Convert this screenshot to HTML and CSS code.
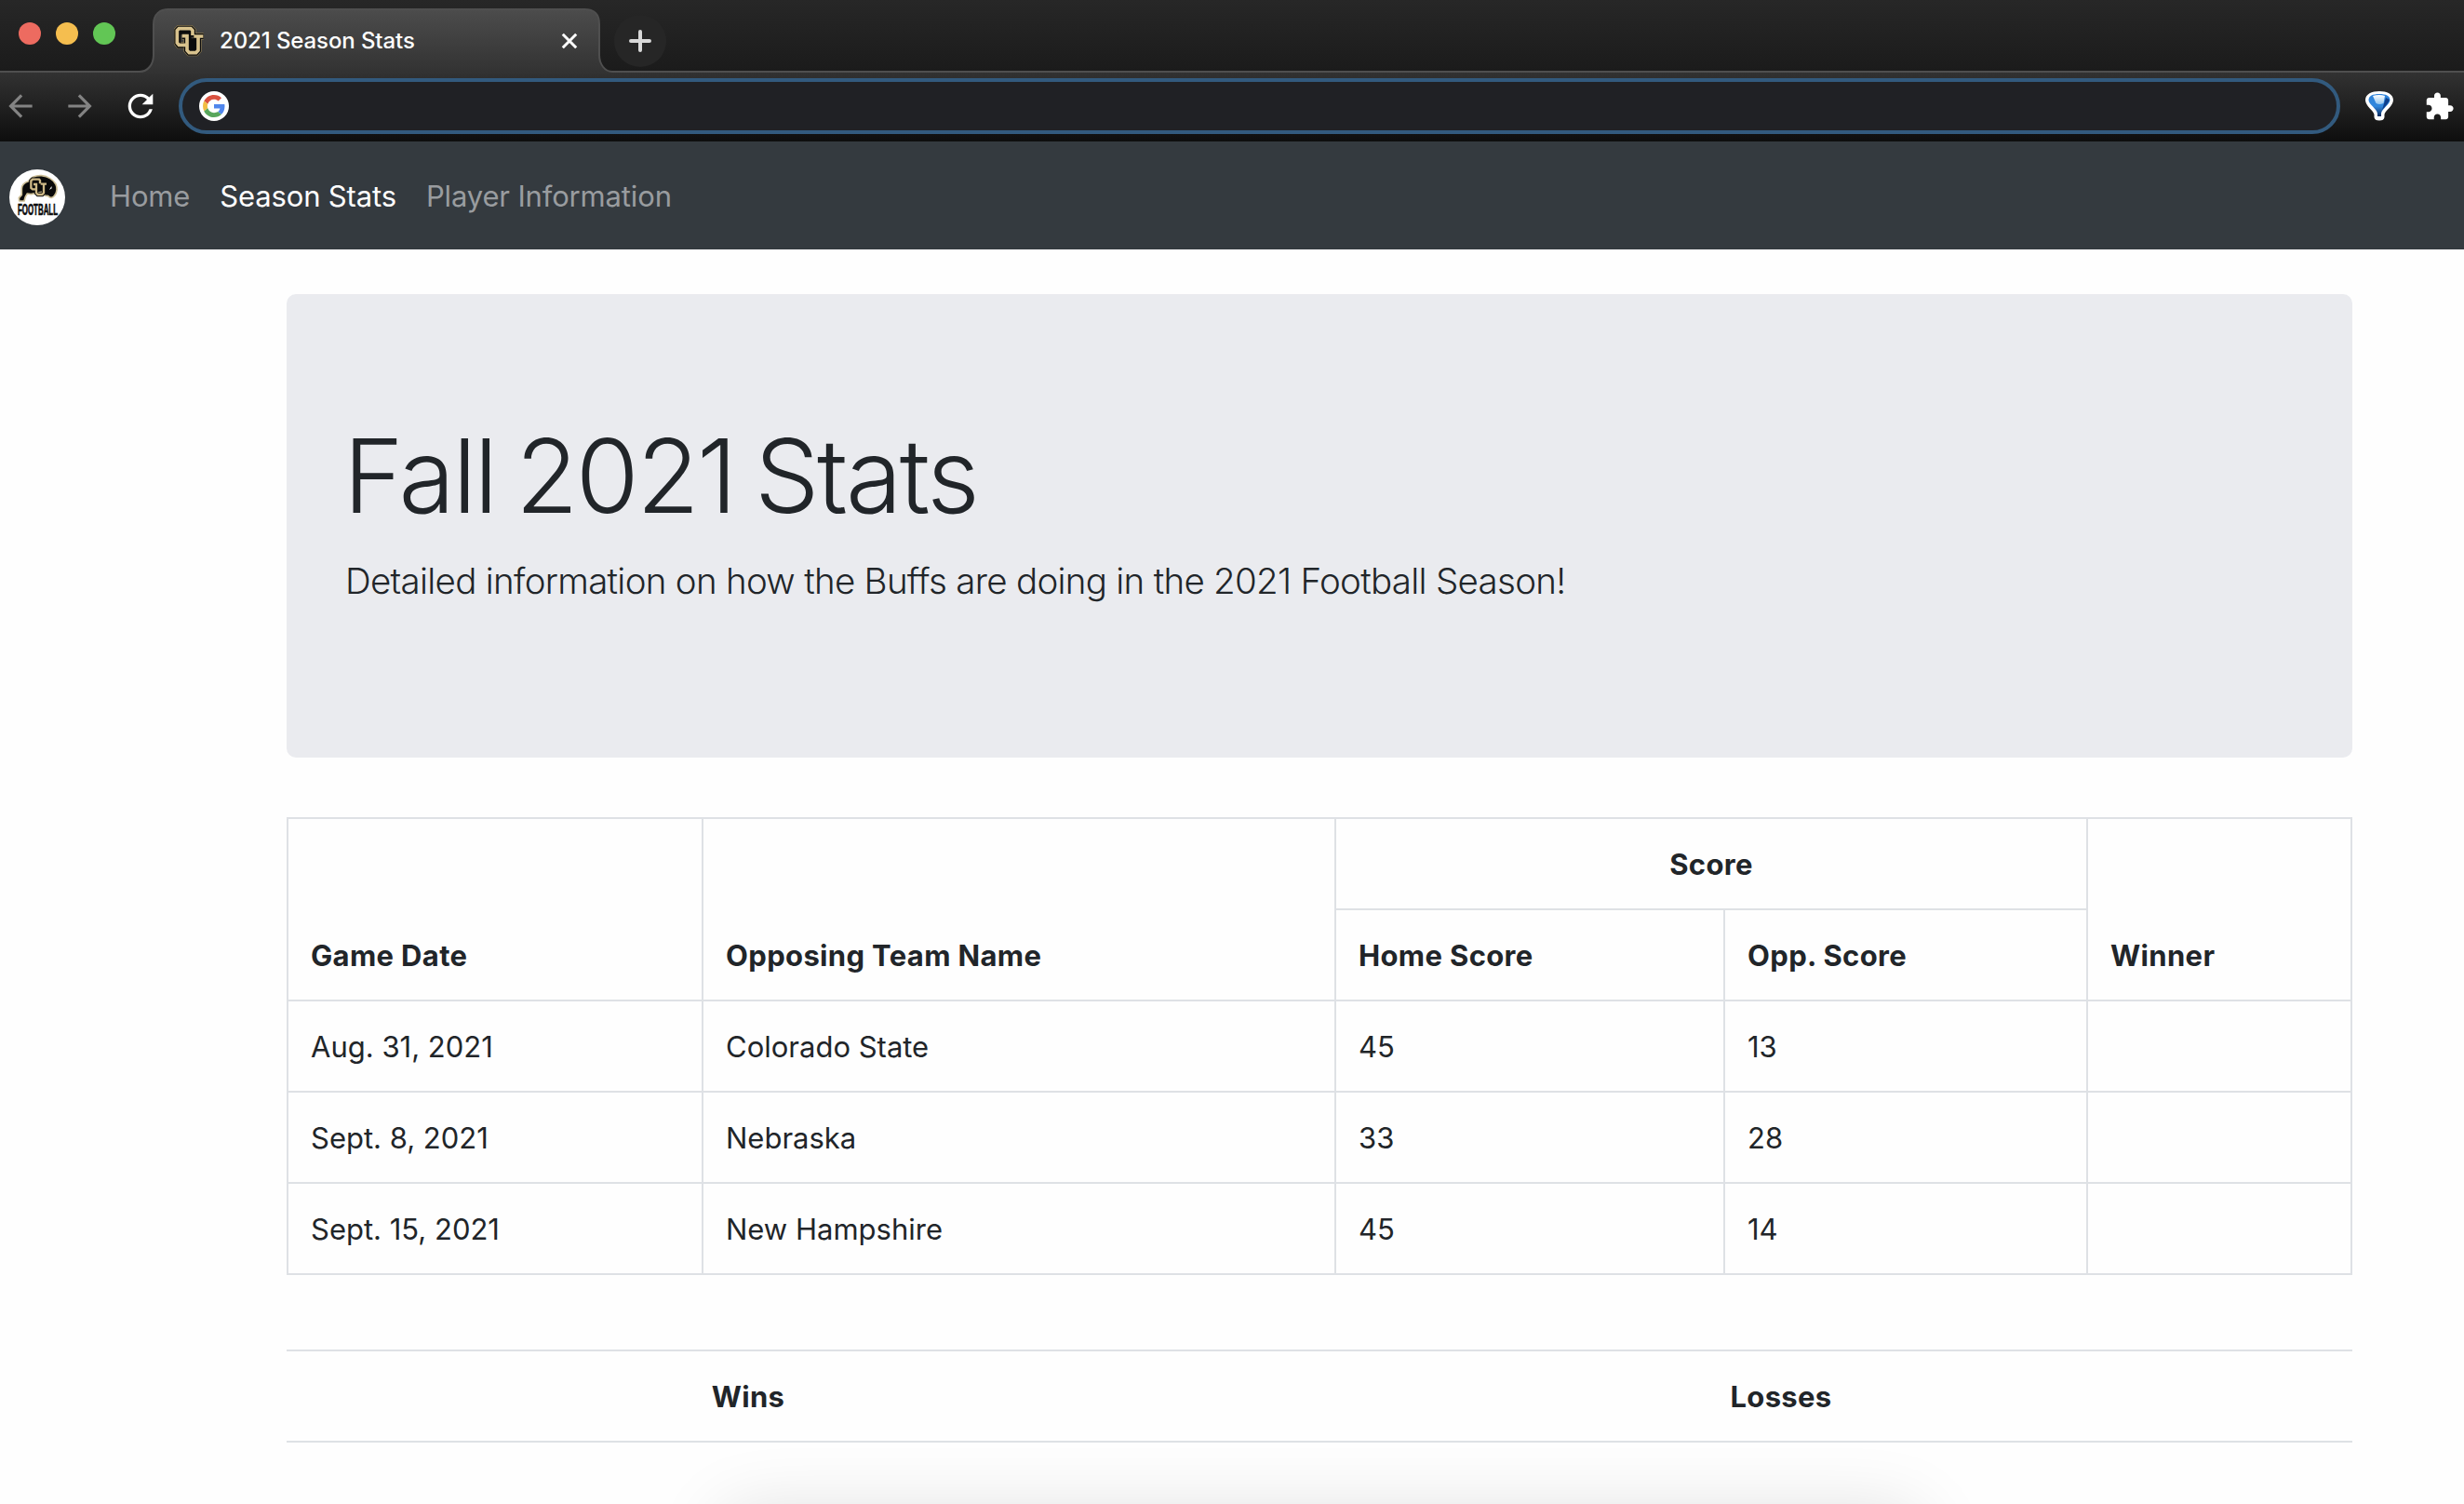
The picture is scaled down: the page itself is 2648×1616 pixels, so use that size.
FILE: index.html
```html
<!DOCTYPE html>
<html lang="en">
<head>
<meta charset="utf-8">
<title>2021 Season Stats</title>
<link rel="stylesheet" href="styles.css">
</head>
<body>
<div class="window">
  <header class="titlebar">
    <div class="lights">
      <span class="light light-close"></span>
      <span class="light light-min"></span>
      <span class="light light-max"></span>
    </div>
    <div class="tab">
      <svg class="tab-shape" viewBox="0 0 508 70" width="508" height="70">
        <defs>
          <linearGradient id="tabFill" x1="0" y1="0" x2="0" y2="1">
            <stop offset="0" stop-color="#4c4c4c"/>
            <stop offset="1" stop-color="#323232"/>
          </linearGradient>
        </defs>
        <path d="M0 68C9 68 15 60 15 50V17C15 6 22 1 31 1H478C488 1 494 6 494 17V50C494 60 500 68 508 68V70H0Z" fill="url(#tabFill)"/>
        <path d="M0 68C9 68 15 60 15 50V17C15 6 22 1 31 1H478C488 1 494 6 494 17V50C494 60 500 68 508 68" fill="none" stroke="#4f4f4f" stroke-width="2"/>
      </svg>
      <svg class="favicon" viewBox="12 9 102 102" width="34" height="34">
        <g fill="none">
          <path d="M72 47V26L66 20H28L22 26V66L28 74H44M38 45H54V90L61 98H83L90 90V46M74 45H107" stroke="#85754f" stroke-width="22"/>
          <path d="M72 47V26L66 20H28L22 26V66L28 74H44M38 45H54V90L61 98H83L90 90V46M74 45H107" stroke="#0c0c0c" stroke-width="18"/>
          <path d="M28 26H68V52H84V92H60V40H34V68H28Z" fill="#0c0c0c"/>
          <path d="M38 44H54V90L61 98H83L90 90V46M76 45H106" stroke="#d8c28d" stroke-width="11"/>
          <path d="M72 42V26L66 20H28L22 26V66L28 73H54" stroke="#d8c28d" stroke-width="11"/>
        </g>
      </svg>
      <span class="tab-title">2021 Season Stats</span>
      <svg class="tab-close" viewBox="0 0 18 18" width="18" height="18"><path d="M1.8 1.8 16.2 16.2M16.2 1.8 1.8 16.2" stroke="#fff" stroke-width="3"/></svg>
    </div>
    <div class="new-tab">
      <svg viewBox="0 0 24 24" width="24" height="24"><path d="M12 2V22M2 12H22" stroke="#d8d8d8" stroke-width="4" stroke-linecap="round"/></svg>
    </div>
  </header>

  <div class="toolbar">
    <svg class="nav-icon" viewBox="0 0 24 24" width="38" height="38"><path fill="#838383" d="M20 11H7.83l5.59-5.59L12 4l-8 8 8 8 1.41-1.41L7.83 13H20v-2z"/></svg>
    <svg class="nav-icon" viewBox="0 0 24 24" width="38" height="38"><path fill="#838383" d="M12 4l-1.41 1.41L16.17 11H4v2h12.17l-5.58 5.59L12 20l8-8z"/></svg>
    <svg class="nav-icon reload" viewBox="0 0 24 24" width="40" height="40"><path fill="#fff" d="M17.65 6.35A7.958 7.958 0 0 0 12 4c-4.42 0-7.99 3.58-7.99 8s3.57 8 7.99 8c3.73 0 6.84-2.55 7.73-6h-2.08A5.99 5.99 0 0 1 12 18c-3.31 0-6-2.69-6-6s2.69-6 6-6c1.66 0 3.14.69 4.22 1.78L13 11h7V4l-2.35 2.35z"/></svg>
    <div class="omnibox">
      <span class="google">
        <svg viewBox="0 0 48 48" width="24" height="24">
          <path fill="#d9513f" d="M24 9.5c3.54 0 6.71 1.22 9.21 3.6l6.85-6.85C35.9 2.38 30.47 0 24 0 14.62 0 6.51 5.38 2.56 13.22l7.98 6.19C12.43 13.72 17.74 9.5 24 9.5z"/>
          <path fill="#5086ec" d="M46.98 24.55c0-1.57-.15-3.09-.38-4.55H24v9.02h12.94c-.58 2.96-2.26 5.48-4.78 7.18l7.73 6c4.51-4.18 7.09-10.36 7.09-17.65z"/>
          <path fill="#f2bd42" d="M10.53 28.59c-.48-1.45-.76-2.99-.76-4.59s.27-3.14.76-4.59l-7.98-6.19C.92 16.46 0 20.12 0 24s.92 7.54 2.56 10.78l7.97-6.19z"/>
          <path fill="#58a65c" d="M24 48c6.48 0 11.93-2.13 15.89-5.81l-7.73-6c-2.15 1.45-4.92 2.3-8.16 2.3-6.26 0-11.57-4.22-13.47-9.91l-7.98 6.19C6.51 42.62 14.62 48 24 48z"/>
        </svg>
      </span>
    </div>
    <svg class="balloon" viewBox="0 0 32 34" width="32" height="34">
      <defs>
        <linearGradient id="balloonFill" x1="0" y1="0" x2="0" y2="1">
          <stop offset="0" stop-color="#2f83da"/>
          <stop offset=".55" stop-color="#2f86dc"/>
          <stop offset="1" stop-color="#0a2a5e"/>
        </linearGradient>
        <linearGradient id="balloonShine" x1="0" y1="0" x2="0" y2="1">
          <stop offset="0" stop-color="#fff"/>
          <stop offset="1" stop-color="#8fc4ee"/>
        </linearGradient>
      </defs>
      <path d="M16 1C8 1 1 4 1 10.500C1 17 10 22 10.500 26V29Q11 32.500 16 32.500T21.500 29V26C22 22 31 17 31 10.500C31 4 24 1 16 1Z" fill="#fff"/>
      <path d="M16 4C9 4 4.500 6 4.500 10.500C4.500 15 13.500 20 14 25V28H18V25C18.500 20 27.500 15 27.500 10.500C27.500 6 23 4 16 4Z" fill="url(#balloonFill)"/>
      <path d="M9 6Q16 4 22 6L20.500 14Q16 16 12.500 14Z" fill="url(#balloonShine)"/>
      <path d="M23 8L27 10Q26 14 19 21Z" fill="#0d3f8c"/>
    </svg>
    <svg class="puzzle" viewBox="0 0 24 24" width="33" height="33"><path fill="#fff" d="M20.500 11H19V7c0-1.100-.9-2-2-2h-4V3.500C13 2.120 11.880 1 10.500 1S8 2.120 8 3.500V5H4c-1.100 0-1.990.9-1.990 2v3.800H3.500c1.490 0 2.700 1.210 2.700 2.700s-1.210 2.700-2.700 2.700H2V20c0 1.100.9 2 2 2h3.800v-1.500c0-1.490 1.210-2.700 2.700-2.700 1.490 0 2.700 1.210 2.700 2.700V22H17c1.100 0 2-.9 2-2v-4h1.500c1.380 0 2.500-1.120 2.500-2.500S21.880 11 20.500 11z"/></svg>
  </div>

  <nav class="navbar">
    <svg class="brand" viewBox="0 0 180 180" width="60" height="60">
      <circle cx="90" cy="90" r="90" fill="#fff"/>
      <path d="M40 62C40 50 50 42 62 38C72 24 86 19 104 20C124 22 142 34 150 48C156 62 152 76 146 84C140 92 132 94 126 86L114 84L108 72L70 80L58 78L52 88L48 102H32L31 92L40 82Z" fill="#0a0a0a" stroke="#cdbf96" stroke-width="5" stroke-linejoin="round"/>
      <path d="M129 66l7-12 1 7z" fill="#fff"/>
      <g fill="none">
        <path d="M99 46V36L96 32H75L70 37V60L75 64H88M78 48H87V76L92 81H106L111 76V48M101 47H120" stroke="#0a0a0a" stroke-width="13"/>
        <path d="M99 46V36L96 32H75L70 37V60L75 64H88M78 48H87V76L92 81H106L111 76V48M101 47H120" stroke="#cdb886" stroke-width="7"/>
      </g>
      <text class="brand-text" x="27" y="148" textLength="129" lengthAdjust="spacingAndGlyphs">FOOTBALL</text>
    </svg>
    <a class="nav-link">Home</a>
    <a class="nav-link active">Season Stats</a>
    <a class="nav-link">Player Information</a>
  </nav>

  <main class="container">
    <section class="jumbotron">
      <h1>Fall 2021 Stats</h1>
      <p>Detailed information on how the Buffs are doing in the 2021 Football Season!</p>
    </section>

    <table class="table bordered">
      <colgroup><col class="c-date"><col class="c-team"><col class="c-home"><col class="c-opp"><col class="c-win"></colgroup>
      <thead>
        <tr><th rowspan="2">Game Date</th><th rowspan="2">Opposing Team Name</th><th colspan="2" class="center">Score</th><th rowspan="2">Winner</th></tr>
        <tr><th>Home Score</th><th>Opp. Score</th></tr>
      </thead>
      <tbody>
        <tr><td>Aug. 31, 2021</td><td>Colorado State</td><td>45</td><td>13</td><td></td></tr>
        <tr><td>Sept. 8, 2021</td><td>Nebraska</td><td>33</td><td>28</td><td></td></tr>
        <tr><td>Sept. 15, 2021</td><td>New Hampshire</td><td>45</td><td>14</td><td></td></tr>
      </tbody>
    </table>

    <table class="table totals">
      <colgroup><col class="c-wins"><col></colgroup>
      <thead><tr><th>Wins</th><th>Losses</th></tr></thead>
    </table>
  </main>
  <div class="overlay-shadow"></div>
</div>
</body>
</html>
```
FILE: styles.css
```css
* { box-sizing: border-box; }

body {
  margin: 0;
  background: #fefefe;
  color: #212529;
  font-family: Inter, "Liberation Sans", sans-serif;
  font-size: 31px;
  line-height: 48px;
}

.window {
  position: relative;
  width: 2648px;
  height: 1616px;
  overflow: hidden;
}

/* Browser chrome */
.titlebar {
  display: flex;
  height: 78px;
  background: linear-gradient(#272727, #1b1b1b);
  border-bottom: 2px solid #4f4f4f;
}

.lights {
  display: flex;
  gap: 16px;
  width: 150px;
  padding: 24px 0 0 20px;
}

.light {
  width: 24px;
  height: 24px;
  border-radius: 50%;
}

.light-close { background: #ed6b60; }
.light-min { background: #f5be4f; }
.light-max { background: #62c655; }

.tab {
  position: relative;
  display: flex;
  align-items: center;
  width: 508px;
  height: 70px;
  margin-top: 9px;
  padding-left: 37px;
}

.tab-shape {
  position: absolute;
  left: 0;
  top: 0;
}

.favicon,
.tab-title,
.tab-close { position: relative; }

.tab-title {
  width: 367px;
  margin-left: 15px;
  color: #fff;
  font-size: 24px;
  font-weight: 500;
  letter-spacing: -0.1px;
}

.new-tab {
  display: flex;
  align-items: center;
  justify-content: center;
  width: 56px;
  height: 56px;
  margin: 16px 0 0 2px;
  border-radius: 50%;
  background: #262626;
}

.toolbar {
  display: flex;
  align-items: center;
  height: 74px;
  padding: 0 10px 2px 3px;
  background: linear-gradient(#323232, #0e0e0e);
}

.nav-icon { margin-right: 26px; }
.nav-icon.reload { margin-right: 21px; }

.omnibox {
  display: flex;
  align-items: center;
  width: 2324px;
  height: 60px;
  padding-left: 18px;
  border: 4px solid #325a7e;
  border-radius: 30px;
  background: #202125;
}

.google {
  display: flex;
  align-items: center;
  justify-content: center;
  width: 32px;
  height: 32px;
  border-radius: 50%;
  background: #fff;
}

.balloon { margin-left: 26px; }
.puzzle { margin-left: 32px; }

/* Site navigation */
.navbar {
  display: flex;
  align-items: center;
  height: 116px;
  padding: 4px 0 0 10px;
  background: #343a3f;
}

.brand {
  margin-right: 48px;
  overflow: visible;
}

.brand-text {
  font-family: "Liberation Sans Narrow", "Liberation Sans", sans-serif;
  font-size: 47px;
  font-weight: 700;
  fill: #0a0a0a;
  stroke: #0a0a0a;
  stroke-width: 2px;
}

.nav-link {
  margin: -2px 32px 0 0;
  color: #999c9f;
  letter-spacing: -0.15px;
}

.nav-link.active { color: #fff; }

/* Page content */
.container {
  width: 2220px;
  margin: 48px 0 0 308px;
}

.jumbotron {
  height: 498px;
  padding: 128px 63px;
  border-radius: 10px;
  background: #eaebef;
}

.jumbotron h1 {
  margin: 0 0 16px -2px;
  font-size: 110px;
  font-weight: 300;
  line-height: 134px;
  letter-spacing: -2.6px;
  word-spacing: -7px;
}

.jumbotron p {
  margin: 0;
  font-size: 38.5px;
  font-weight: 300;
  line-height: 60px;
  letter-spacing: -0.71px;
}

.table {
  width: 2220px;
  border-collapse: collapse;
  table-layout: fixed;
}

.table th,
.table td {
  height: 98px;
  padding: 25px 24px 23px;
  text-align: left;
  vertical-align: bottom;
}

.table th {
  font-weight: 700;
  letter-spacing: 0.35px;
}

.bordered { margin-top: 64px; }

.bordered th,
.bordered td { border: 2px solid #dee1e5; }

.table th.center { text-align: center; }

.c-date { width: 446px; }
.c-team { width: 680px; }
.c-home { width: 418px; }
.c-opp { width: 390px; }
.c-win { width: 284px; }

.totals { margin-top: 80px; }

.totals th {
  border-top: 2px solid #dee1e5;
  border-bottom: 2px solid #dee1e5;
  text-align: center;
}

.c-wins { width: 992px; }

/* Shadow cast by a panel just below the visible area */
.overlay-shadow {
  position: absolute;
  left: 780px;
  top: 1628px;
  width: 1280px;
  height: 200px;
  box-shadow: 0 0 80px rgba(0, 0, 0, 0.14);
}
```
